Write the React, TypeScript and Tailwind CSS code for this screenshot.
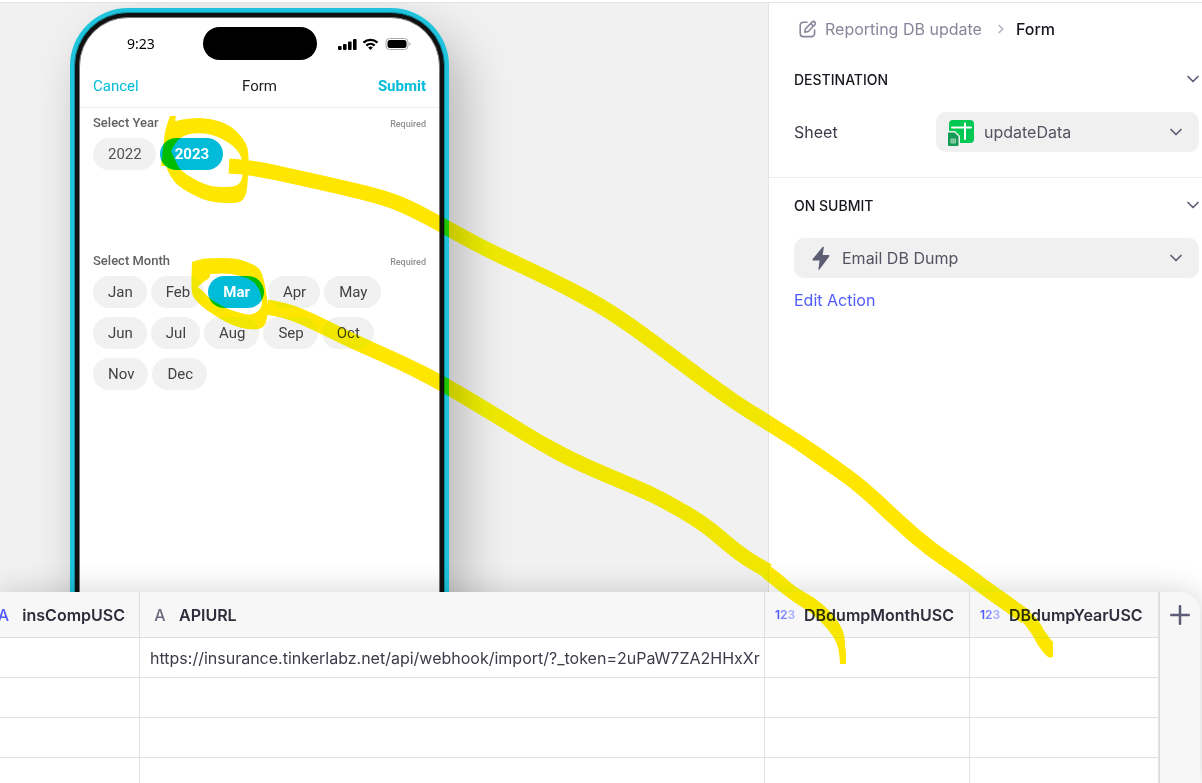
import { useState } from 'react';
import { ChevronDown, ChevronRight, Plus } from 'lucide-react';

const years = ['2022', '2023'];
const months = ['Jan', 'Feb', 'Mar', 'Apr', 'May', 'Jun', 'Jul', 'Aug', 'Sep', 'Oct', 'Nov', 'Dec'];

const apiUrl = 'https://insurance.tinkerlabz.net/api/webhook/import/?_token=2uPaW7ZA2HHxXr';

function StatusIcons() {
  return (
    <svg width="74" height="14" viewBox="0 0 74 14" aria-hidden="true">
      <rect x="0" y="9" width="3.6" height="4" rx="1" />
      <rect x="5" y="7" width="3.6" height="6" rx="1" />
      <rect x="10" y="4.5" width="3.6" height="8.5" rx="1" />
      <rect x="15" y="2" width="3.6" height="11" rx="1" />
      <path d="M25.5 5.6a10.4 10.4 0 0 1 14 0" fill="none" stroke="#000" strokeWidth="2.4" />
      <path d="M28.3 8.6a6.2 6.2 0 0 1 8.4 0" fill="none" stroke="#000" strokeWidth="2.2" />
      <path d="M30.1 10.6a3.6 3.6 0 0 1 4.8 0L32.5 13z" />
      <rect x="48" y="1.5" width="22" height="11" rx="3.5" fill="none" stroke="#a8a8a8" />
      <rect x="49.5" y="3" width="19" height="8" rx="2.5" />
      <path d="M71.5 5.3c1.6.5 1.6 2.9 0 3.4z" fill="#a8a8a8" />
    </svg>
  );
}

function ChipField({ label, options, value, onChange, tone }: {
  label: string;
  options: string[];
  value: string;
  onChange: (v: string) => void;
  tone: string;
}) {
  return (
    <div role="group" aria-label={label}>
      <div className="flex h-5 items-baseline justify-between leading-5">
        <span className="text-[13px] font-medium text-[#616161]">{label}</span>
        <span className="text-[9px] font-medium text-[#909090]">Required</span>
      </div>
      <div className="mt-[5px] flex flex-wrap gap-x-1 gap-y-[9px]">
        {options.map((option) => (
          <button
            key={option}
            type="button"
            aria-pressed={option === value}
            onClick={() => onChange(option)}
            className={`h-8 rounded-full pr-[14px] pl-[15px] text-[15px] ${
              option === value ? 'bg-[#00bcd8] font-bold text-white' : `bg-[#f1f1f1] ${tone}`
            }`}
          >
            {option}
          </button>
        ))}
      </div>
    </div>
  );
}

function Phone() {
  const [year, setYear] = useState('2023');
  const [month, setMonth] = useState('Mar');

  return (
    <div className="h-[780px] w-[379px] shrink-0 rounded-[58px] bg-[#1fc3dc] p-1 shadow-[14px_24px_50px_rgba(0,0,0,0.25)]">
      <div className="h-full rounded-[54px] border border-[#0e8da0] bg-[#111] p-1">
        <div className="h-full overflow-hidden rounded-[49px] border border-[#777] bg-white font-['Roboto',sans-serif]">
          <div className="grid h-[51px] grid-cols-[1fr_auto_1fr] items-center">
            <span className="pl-[47px] font-['Noto_Sans',sans-serif] text-[14px] text-black">9:23</span>
            <div className="h-[33px] w-[114px] rounded-full bg-black" />
            <div className="flex justify-end pr-[27px]">
              <StatusIcons />
            </div>
          </div>
          <div className="grid h-[39px] grid-cols-3 items-center border-b border-[#ececec] px-[13px] pb-1 text-[15px]">
            <button type="button" className="text-left text-[#00bcd8]">Cancel</button>
            <h1 className="text-center text-[#212121]">Form</h1>
            <button type="button" className="text-right font-bold text-[#00bcd8]">Submit</button>
          </div>
          <div className="flex flex-col gap-[81px] px-[13px] pt-[5px]">
            <ChipField label="Select Year" options={years} value={year} onChange={setYear} tone="text-[#555555]" />
            <ChipField label="Select Month" options={months} value={month} onChange={setMonth} tone="text-[#424242]" />
          </div>
        </div>
      </div>
    </div>
  );
}

function EditIcon() {
  return (
    <svg width="18" height="18" viewBox="0 0 18 18" fill="none" stroke="#86869b" strokeWidth="1.6" strokeLinecap="round" strokeLinejoin="round" aria-hidden="true">
      <path d="M8 2.2H4.4A3.2 3.2 0 0 0 1.2 5.4v8A3.2 3.2 0 0 0 4.4 16.6h8a3.2 3.2 0 0 0 3.2-3.2V10" />
      <path d="M5.8 12.2l.7-3.4 6.6-6.7a1.9 1.9 0 0 1 2.7 2.7L9.2 11.5z" />
      <path d="M11.8 3.5l2.7 2.7" />
    </svg>
  );
}

function SheetIcon() {
  return (
    <svg width="28" height="28" viewBox="0 0 28 28" aria-hidden="true">
      <rect x="2" y="2" width="25" height="23" rx="4" fill="#00c853" />
      <path d="M5 9.5h19M18 5.5v15.5" stroke="#fff" strokeWidth="2" strokeLinecap="round" />
      <path d="M0 13h8l5 5V28H0z" fill="#f0f0f0" />
      <path d="M1 15.500a1 1 0 0 1 1-1h5.500l4 4V27a1 1 0 0 1-1 1H2a1 1 0 0 1-1-1z" fill="#149b55" />
      <path d="M4 21h4.5v4H4zM4 23h4.5M6.2 21v4" fill="none" stroke="#bfe6cf" strokeWidth=".8" />
    </svg>
  );
}

function BoltIcon() {
  return (
    <svg width="18" height="24" viewBox="0 0 18 24" fill="#5c5c74" aria-hidden="true">
      <path d="M10.5 1c.8-.6 1.5-.2 1.3.8L10.6 9h6c.9 0 1.2.8.6 1.5L7.5 23.5c-.6.6-1.3.3-1.1-.6L7.6 14.6H1.3c-.9 0-1.2-.8-.6-1.5z" />
    </svg>
  );
}

function SectionTitle({ children }: { children: string }) {
  return (
    <div className="flex h-5 items-center justify-between">
      <h2 className="text-[14px] font-medium text-[#17171f]">{children}</h2>
      <button type="button" aria-label={`Toggle ${children}`} className="-mr-1">
        <ChevronDown size={20} className="text-[#5c5c74]" />
      </button>
    </div>
  );
}

function SettingsPanel() {
  return (
    <aside className="w-[434px] shrink-0 border-l border-[#e4e4e4] bg-white text-[16px]">
      <nav className="flex h-[52px] items-center pl-[30px]">
        <EditIcon />
        <a href="#reporting" className="ml-2 text-[#86869b]">Reporting DB update</a>
        <ChevronRight size={14} strokeWidth={3} className="ml-3 mr-2 text-[#b4b4c0]" />
        <span className="font-medium text-[#17171f]">Form</span>
      </nav>
      <section className="border-b border-[#ececec] pt-[14px] pr-[3px] pb-[25px] pl-[25px]">
        <SectionTitle>DESTINATION</SectionTitle>
        <div className="mt-[23px] flex items-center">
          <label htmlFor="sheet" className="w-[142px] text-[#3b3b4a]">Sheet</label>
          <div className="flex h-10 flex-1 items-center rounded-[10px] bg-[#f0f0f0] pr-[13px] pl-[11px]">
            <SheetIcon />
            <select id="sheet" className="ml-[9px] flex-1 appearance-none text-[#535362]">
              <option>updateData</option>
            </select>
            <ChevronDown size={20} className="pointer-events-none text-[#5c5c74]" />
          </div>
        </div>
      </section>
      <section className="pt-[17px] pr-[3px] pl-[25px]">
        <SectionTitle>ON SUBMIT</SectionTitle>
        <div className="mt-[23px] flex h-10 items-center rounded-[10px] bg-[#f0f0f0] pr-[13px] pl-[18px]">
          <BoltIcon />
          <select aria-label="On submit action" className="ml-3 flex-1 appearance-none text-[#535362]">
            <option>Email DB Dump</option>
          </select>
          <ChevronDown size={20} className="pointer-events-none text-[#5c5c74]" />
        </div>
        <a href="#edit-action" className="mt-[10px] inline-block text-[#4f5bff]">Edit Action</a>
      </section>
    </aside>
  );
}

const columns = [
  { name: 'insCompUSC', kind: 'text', width: 'w-[140px]', align: 'justify-end pr-[14px]', icon: 'text-[#4f5bff]' },
  { name: 'APIURL', kind: 'text', width: 'w-auto', align: 'px-[10px]', icon: 'text-[#6b6b80]' },
  { name: 'DBdumpMonthUSC', kind: 'number', width: 'w-[205px]', align: 'px-[10px]', icon: '' },
  { name: 'DBdumpYearUSC', kind: 'number', width: 'w-[189px]', align: 'px-[10px]', icon: '' },
];

const rows = [apiUrl, '', '', ''];

function DataTable() {
  return (
    <section className="relative mr-[2px] flex h-[191px] shrink-0 overflow-hidden rounded-tr-[20px] bg-[#f7f7f7] shadow-[0_0_30px_rgba(0,0,0,0.18)]">
      <div className="min-w-0 flex-1 border-r border-[#dcdcdc]">
        <table className="w-full table-fixed border-separate border-spacing-0 text-left text-[16px]">
          <thead>
            <tr className="h-[46px]">
              {columns.map((col) => (
                <th key={col.name} className={`overflow-hidden border-r border-b border-[#dfdfdf] p-0 font-semibold text-[#2d2d3c] ${col.width}`}>
                  <div className={`flex items-center gap-[9px] ${col.align}`}>
                    {col.kind === 'text' ? (
                      <span className={`w-5 shrink-0 text-center font-medium ${col.icon}`}>A</span>
                    ) : (
                      <span className="w-5 shrink-0 text-center text-[12px] text-[#4f5bff]">
                        1<span className="text-[#7b84ff]">2</span><span className="text-[#a3a9ff]">3</span>
                      </span>
                    )}
                    {col.name}
                  </div>
                </th>
              ))}
            </tr>
          </thead>
          <tbody>
            {rows.map((url, i) => (
              <tr key={i} className="h-10 bg-white">
                {columns.map((col) => (
                  <td key={col.name} className="overflow-hidden border-r border-b border-[#e2e2e2] p-0 pl-[10px] whitespace-nowrap text-[#3b3b4a]">
                    {col.name === 'APIURL' ? url : ''}
                  </td>
                ))}
              </tr>
            ))}
          </tbody>
        </table>
      </div>
      <button type="button" aria-label="Add column" className="flex h-[46px] w-10 items-center justify-center text-[#5c5c74]">
        <Plus size={30} />
      </button>
    </section>
  );
}

type Point = [number, number];

// rounds a hand drawn line by running quadratic curves through the midpoints
function smooth(points: Point[]): string {
  const last = points[points.length - 1];
  let d = `M${points[0][0]} ${points[0][1]}`;
  for (let i = 1; i < points.length - 1; i++) {
    const [x, y] = points[i];
    const [nx, ny] = points[i + 1];
    d += ` Q${x} ${y} ${(x + nx) / 2} ${(y + ny) / 2}`;
  }
  return `${d} L${last[0]} ${last[1]}`;
}

const yearLine: Point[] = [
  [229, 166], [250, 167], [300, 178], [345, 188], [385, 198], [410, 208], [440, 224], [485, 249],
  [550, 279], [600, 305], [640, 332], [700, 377], [733, 401], [768, 423], [800, 443], [830, 464],
  [862, 487], [900, 523], [930, 549], [960, 569], [985, 588], [1005, 602], [1026, 617],
];
const yearTip: Point[] = [
  [1018, 603], [1037, 617], [1044, 631], [1053, 642], [1053, 642], [1053, 657], [1053, 657],
  [1048, 658], [1038, 646], [1031, 632], [1020, 619],
];
const monthLine: Point[] = [
  [267, 307], [285, 310], [310, 320], [350, 340], [400, 362], [440, 382], [500, 418], [540, 443], [580, 464],
  [640, 489], [665, 501], [703, 523], [730, 546], [747, 559], [768, 571],
];
const monthTip: Point[] = [
  [762, 560], [780, 573], [796, 588], [814, 597], [830, 611], [840, 624], [845, 636], [845, 649],
  [846, 649], [846, 664], [846, 664], [840, 664], [840, 664], [839, 649], [834, 637], [825, 626],
  [812, 613], [793, 602], [762, 577],
];
const yearRingOuter: Point[] = [
  [170, 116], [176, 116], [176, 116], [175, 121], [175, 121], [190, 118], [210, 118], [230, 125], [243, 138],
  [249, 150], [248, 180], [246, 196], [240, 203], [226, 203], [210, 202], [195, 196], [178, 186], [170, 176],
  [166, 166], [166, 166], [161, 166], [161, 166], [163, 150], [165, 130], [170, 116],
];
const yearRingInner: Point[] = [
  [171, 151], [176, 141], [185, 135], [195, 133], [212, 134], [230, 143], [240, 153], [243, 163],
  [243, 175], [240, 184], [232, 187], [212, 187], [195, 180], [180, 170], [176, 162], [171, 151],
];
const monthRingOuter: Point[] = [
  [192, 262], [200, 259], [210, 258], [235, 258], [248, 262], [260, 268], [264, 280], [267, 297],
  [268, 308], [267, 320], [264, 327], [256, 330], [240, 328], [225, 322], [205, 309], [195, 300],
  [191, 292], [192, 262],
];
const monthRingInner: Point[] = [
  [210, 274], [225, 273], [238, 275], [252, 280], [259, 288], [262, 300], [262, 306], [258, 312],
  [250, 315], [240, 313], [225, 308], [210, 299], [204, 292], [198, 287], [198, 287], [204, 281], [210, 278], [210, 274],
];

/* Highlighter strokes linking the form fields to their columns */
function Highlighter() {
  return (
    <svg className="pointer-events-none absolute inset-0 mix-blend-darken" width="1202" height="783" viewBox="0 0 1202 783" fill="#ffe600" aria-hidden="true">
      <g fill="none" stroke="#ffe600" strokeWidth="15">
        <path d={smooth(yearLine)} />
        <path d={smooth(monthLine)} />
      </g>
      <path d={smooth(yearTip)} />
      <path d={smooth(monthTip)} />
      <path fillRule="evenodd" d={`${smooth(yearRingOuter)}z ${smooth(yearRingInner)}z`} />
      <path fillRule="evenodd" d={`${smooth(monthRingOuter)}z ${smooth(monthRingInner)}z`} />
    </svg>
  );
}

export default function App() {
  return (
    <div className="relative flex h-screen flex-col overflow-hidden bg-white pt-[2px] font-['Inter',sans-serif]">
      <div className="flex min-h-0 flex-1 border-t border-[#e4e4e4]">
        <main className="flex-1 overflow-hidden bg-[#f1f1f1] pt-[5px] pl-[70px]">
          <Phone />
        </main>
        <SettingsPanel />
      </div>
      <DataTable />
      <Highlighter />
    </div>
  );
}
